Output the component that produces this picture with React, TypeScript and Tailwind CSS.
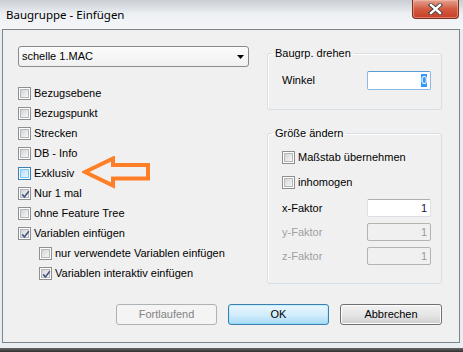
import React from "react";

function Box({ checked, hover }: { checked?: boolean; hover?: boolean }) {
  return (
    <span
      className={`relative w-[13px] h-[13px] shrink-0 border p-[1px] flex bg-white ${
        hover ? "border-[#3c7fb1]" : "border-[#8e8f8f]"
      }`}
    >
      <span
        className={`flex-1 border ${
          hover
            ? "border-[#79c6f9] bg-gradient-to-br from-[#b1dffd] to-[#eaf7fe]"
            : "border-[#b4b8bd] bg-gradient-to-br from-[#d3d5d8] to-[#f7f7f7]"
        }`}
      />
      {checked && (
        <svg className="absolute left-0 top-0" width="13" height="13" viewBox="0 0 13 13">
          <path d="M3.2 6.4 L5.4 9 L9.8 3.2" fill="none" stroke="#4b5a82" strokeWidth="1.7" />
        </svg>
      )}
    </span>
  );
}

function Row({ label, checked, hover, indent }: { label: string; checked?: boolean; hover?: boolean; indent?: boolean }) {
  return (
    <div className={`h-[20px] flex items-center ${indent ? "pl-[21px]" : ""}`}>
      <Box checked={checked} hover={hover} />
      <span className="ml-[3px] leading-[13px]">{label}</span>
    </div>
  );
}

function Field({ value, disabled, focused, h }: { value: string; disabled?: boolean; focused?: boolean; h?: string }) {
  let cls = "border-[#dbdfe6] border-t-[#abadb3] bg-white text-[#1b1046]";
  if (disabled) cls = "border-[#b3b3b3] bg-[#f0f0f0] text-[#9a9a9a]";
  if (focused) cls = "border-[#8ab9e6] border-t-[#5c9ad6] bg-white text-black";
  return (
    <div className={`w-[64px] ${h ?? "h-[18px]"} border rounded-[2px] flex items-center justify-end pr-[3px] ${cls}`}>
      {focused ? (
        <span className="bg-[#3399ff] text-white leading-[13px]">{value}</span>
      ) : (
        <span className="leading-[13px]">{value}</span>
      )}
    </div>
  );
}

function FactorRow({ label, disabled }: { label: string; disabled?: boolean }) {
  return (
    <div className="flex items-center justify-between">
      <span className={disabled ? "text-[#a0a0a0]" : "text-black"}>{label}</span>
      <Field value="1" disabled={disabled} />
    </div>
  );
}

export default function App() {
  return (
    <div className="relative w-[463px] h-[352px] overflow-hidden bg-[#e8edf2] font-['Liberation_Sans',Arial,sans-serif] text-[11px] text-black select-none">
      {/* Title bar */}
      <div className="h-[29px] flex items-start bg-gradient-to-b from-[#c9ced4] via-[#eef1f4] to-[#f4f6f8]">
        <span className="ml-[6px] mt-[7px] font-['Noto_Sans',sans-serif] text-[11.5px] leading-[16px] text-black">
          Baugruppe - Einfügen
        </span>
        <div className="ml-auto mr-[4px] w-[47px] h-[19px] rounded-b-[4px] border border-t-0 border-[#7a2f24] bg-gradient-to-b from-[#e2a291] via-[#d35a40] to-[#c63f27] shadow-[inset_0_0_0_1px_rgba(255,200,180,0.45)] flex items-center justify-center">
          <svg width="15" height="12" viewBox="0 0 15 12">
            <path d="M3 2 L12 10 M12 2 L3 10" stroke="#3d3d3d" strokeWidth="4.2" strokeLinecap="square" />
            <path d="M3 2 L12 10 M12 2 L3 10" stroke="#ffffff" strokeWidth="2.4" strokeLinecap="square" />
          </svg>
        </div>
      </div>

      {/* Client area */}
      <div className="ml-[2px] w-[458px] h-[314px] border border-[#7d848b] bg-[#f0f0f0] flex flex-col">
        <div className="flex pl-[15px] pt-[16px]">
          {/* Left column */}
          <div className="w-[231px] flex flex-col">
            <div className="h-[21px] border border-[#8a8a8a] rounded-[3px] bg-gradient-to-b from-[#fbfbfb] to-[#f1f1f1] flex items-center pl-[3px] pr-[4px]">
              <span className="leading-[13px]">schelle 1.MAC</span>
              <svg className="ml-auto" width="7" height="4" viewBox="0 0 7 4">
                <path d="M0 0 H7 L3.5 4 Z" fill="#000" />
              </svg>
            </div>
            <div className="mt-[16px] flex flex-col">
              <Row label="Bezugsebene" />
              <Row label="Bezugspunkt" />
              <Row label="Strecken" />
              <Row label="DB - Info" />
              <Row label="Exklusiv" hover />
              <Row label="Nur 1 mal" checked />
              <Row label="ohne Feature Tree" />
              <Row label="Variablen einfügen" checked />
              <Row label="nur verwendete Variablen einfügen" indent />
              <Row label="Variablen interaktiv einfügen" checked indent />
            </div>
          </div>

          {/* Right column */}
          <div className="ml-[18px] w-[175px] flex flex-col">
            <fieldset className="border border-[#d5dfe5] rounded-[3px] shadow-[inset_1px_1px_0_#ffffff]">
              <legend className="ml-[4px] px-[3px] leading-[14px]">Baugrp. drehen</legend>
              <div className="pt-[11px] pl-[14px] pr-[10px] pb-[19px] flex items-center justify-between">
                <span>Winkel</span>
                <Field value="0" focused h="h-[19px]" />
              </div>
            </fieldset>
            <fieldset className="mt-[16px] border border-[#d5dfe5] rounded-[3px] shadow-[inset_1px_1px_0_#ffffff]">
              <legend className="ml-[4px] px-[3px] leading-[14px]">Größe ändern</legend>
              <div className="pt-[7px] pl-[14px] pr-[10px] pb-[18px] flex flex-col">
                <div className="h-[20px] flex items-center">
                  <Box />
                  <span className="ml-[3px] leading-[13px]">Maßstab übernehmen</span>
                </div>
                <div className="mt-[5px] h-[20px] flex items-center">
                  <Box />
                  <span className="ml-[3px] leading-[13px]">inhomogen</span>
                </div>
                <div className="mt-[7px] flex flex-col gap-[6px]">
                  <FactorRow label="x-Faktor" />
                  <FactorRow label="y-Faktor" disabled />
                  <FactorRow label="z-Faktor" disabled />
                </div>
              </div>
            </fieldset>
          </div>
        </div>

        {/* Buttons */}
        <div className="mt-auto mb-[17px] pr-[17px] flex justify-end gap-[11px]">
          <div className="w-[101px] h-[21px] rounded-[3px] border border-[#adb2b5] bg-[#f4f4f4] text-[#838383] flex items-center justify-center">
            Fortlaufend
          </div>
          <div className="w-[101px] h-[21px] rounded-[3px] border border-[#3c7fb1] bg-gradient-to-b from-[#eaf6fd] via-[#d2eefc] to-[#a9daf6] shadow-[inset_0_0_0_1px_#48d8fb33] flex items-center justify-center">
            OK
          </div>
          <div className="w-[102px] h-[21px] rounded-[3px] border border-[#707070] bg-gradient-to-b from-[#f2f2f2] via-[#e6e6e6] to-[#cfcfcf] shadow-[inset_0_0_0_1px_#fcfcfc] flex items-center justify-center">
            Abbrechen
          </div>
        </div>
      </div>

      {/* lower frame and backdrop */}
      <div className="h-[5px] bg-[#e9eef3]" />
      <div className="h-[4px] bg-gradient-to-b from-[#6a6a6a] to-[#2f2f2f]" />

      {/* Orange annotation arrow */}
      <svg className="absolute left-[82px] top-[156px]" width="70" height="33" viewBox="0 0 70 33">
        <path
          d="M3 16 L31 2.5 L31 9 L66 9 L66 22.5 L31 22.5 L31 29.5 Z"
          fill="none"
          stroke="#ff7f27"
          strokeWidth="4"
          strokeLinejoin="miter"
        />
      </svg>
    </div>
  );
}
